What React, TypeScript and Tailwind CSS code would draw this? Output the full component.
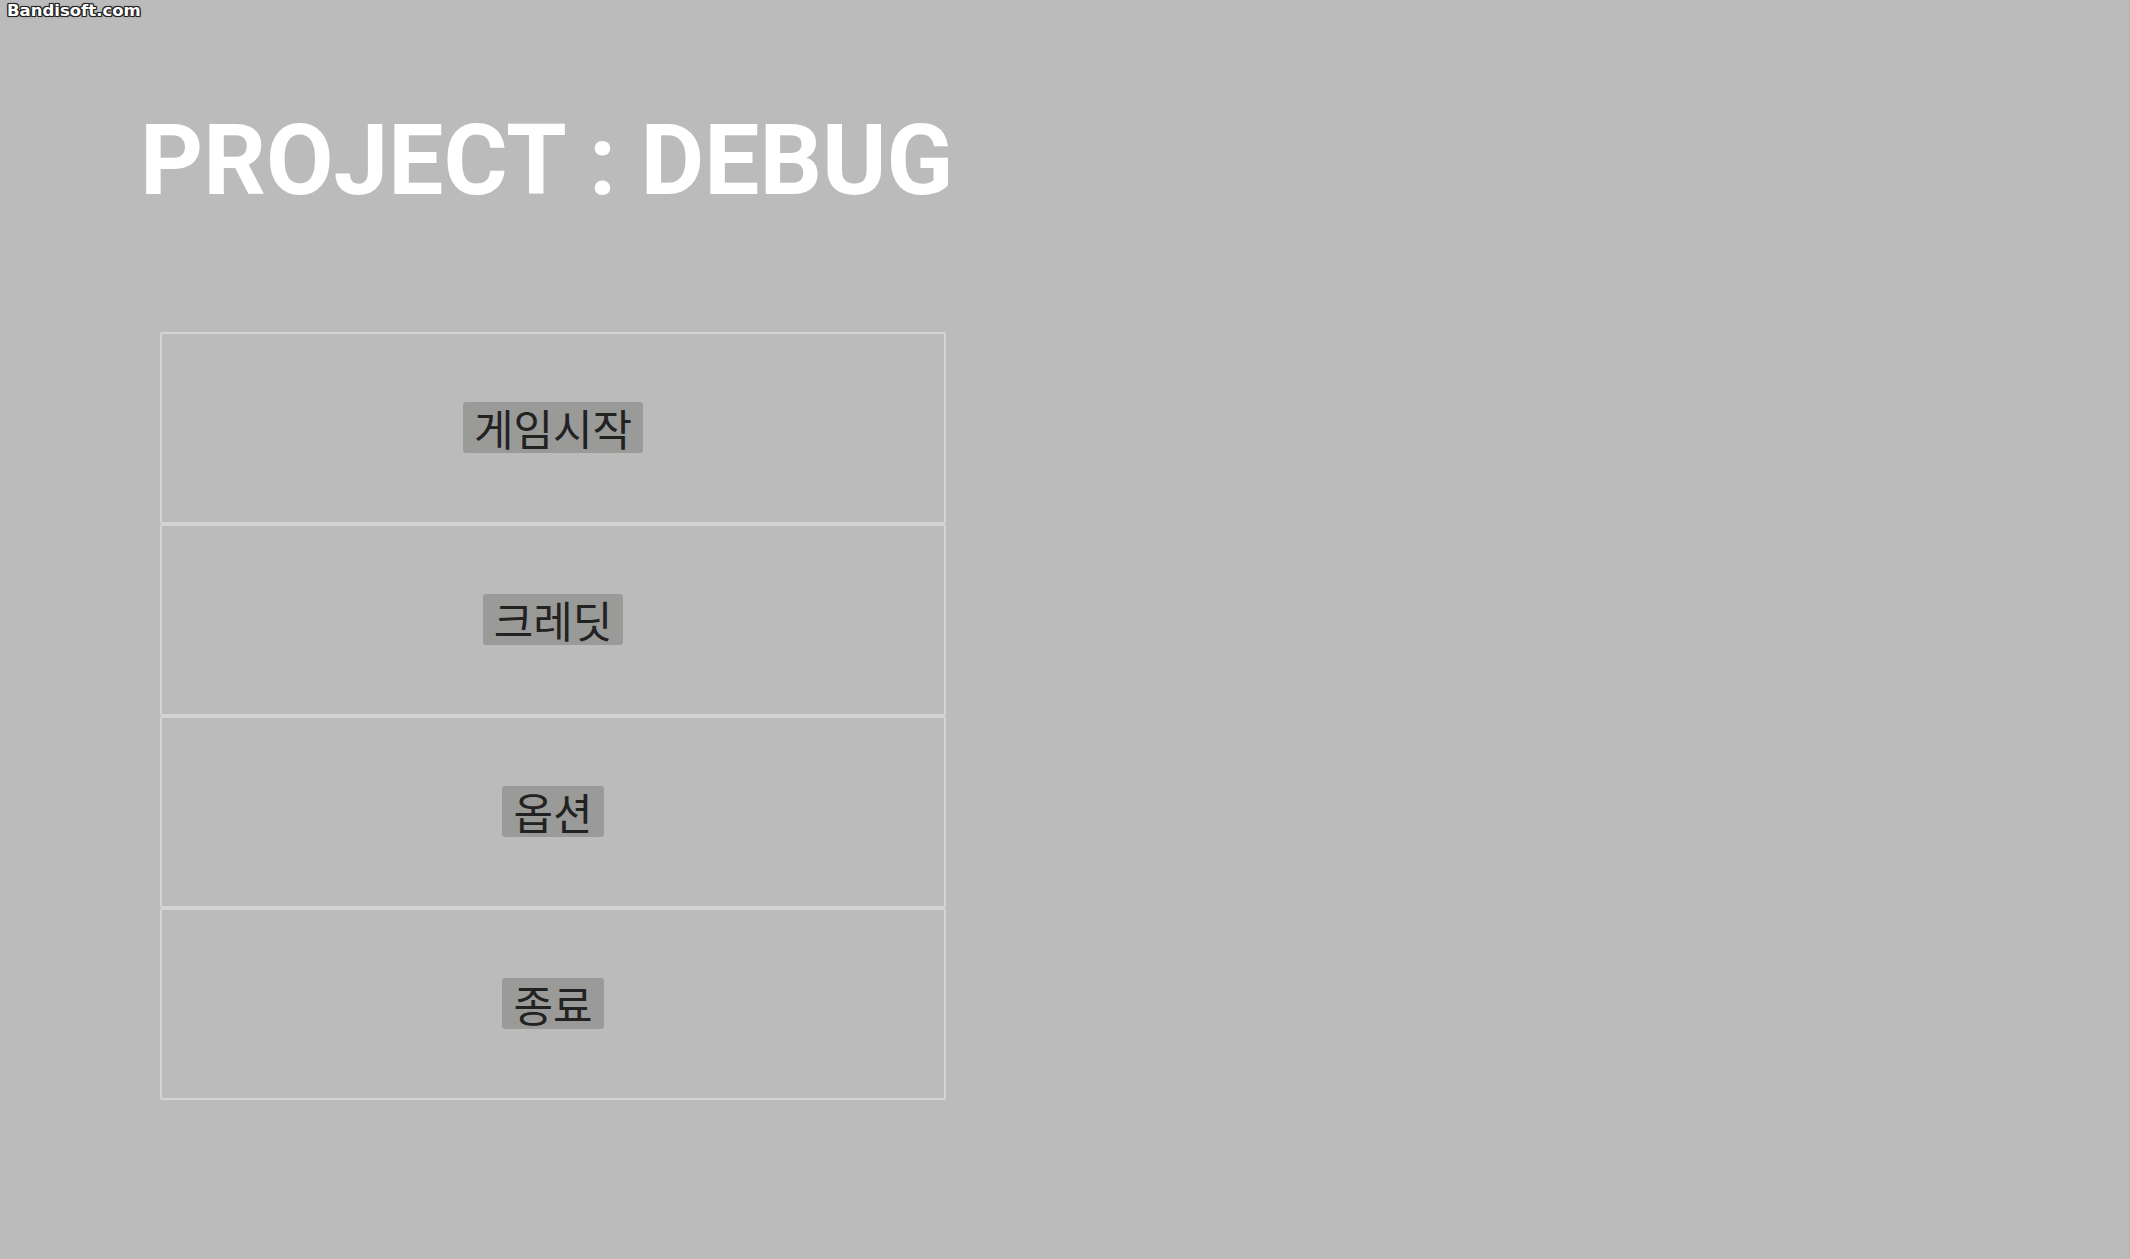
import React from 'react';

const menu = ['게임시작', '크레딧', '옵션', '종료'];

export default function App() {
  return (
    <div className="relative w-[2130px] h-[1259px] overflow-hidden bg-[#bbbbbb]">
      {/* recorder watermark */}
      <div
        className="absolute left-[7px] top-[3px] text-[16.5px] font-bold text-white leading-none"
        style={{
          fontFamily: '"DejaVu Sans", sans-serif',
          textShadow:
            '1px 0 0 #222, -1px 0 0 #222, 0 1px 0 #222, 0 -1px 0 #222, 1px 1px 0 #222, -1px -1px 0 #222, 1px -1px 0 #222, -1px 1px 0 #222, 0 0 3px #555',
        }}
      >
        Bandisoft.com
      </div>

      <div className="absolute right-0 top-0 h-full w-[3px] bg-[repeating-conic-gradient(#c8c8c8_0%_25%,#a9a9a9_0%_50%)] bg-[length:2px_2px]" />

      <div className="flex flex-col pt-[112px]">
        <h1
          className="pl-[140px] text-[98px] font-bold leading-none text-white"
          style={{ fontFamily: 'Roboto, "Liberation Sans", sans-serif' }}
        >
          PROJECT : DEBUG
        </h1>

        <div className="mt-[122px] ml-[160px] flex w-[786px] flex-col">
          {menu.map((label) => (
            <div
              key={label}
              className="flex h-[192px] items-center justify-center rounded-[2px] border-2 border-[#d4d4d4] pb-[2px]"
            >
              <span
                className="rounded-[3px] bg-[#9a9a98] px-[11px] text-[43px] font-normal leading-[51px] text-[#222222]"
                style={{ fontFamily: '"Noto Sans CJK KR", "Noto Sans", sans-serif' }}
              >
                {label}
              </span>
            </div>
          ))}
        </div>
      </div>
    </div>
  );
}
